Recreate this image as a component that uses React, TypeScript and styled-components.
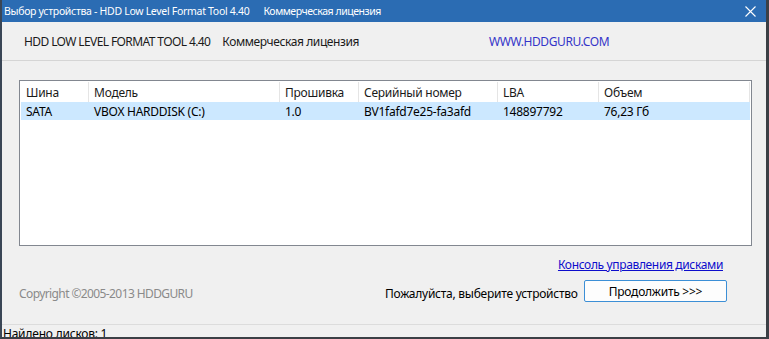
import React from "react";
import styled, { createGlobalStyle } from "styled-components";

const Global = createGlobalStyle`
  html, body { margin: 0; padding: 0; background: #3b3f45; }
  body { font-family: "Noto Sans", "Open Sans", sans-serif; }
  * { box-sizing: border-box; }
`;

const Window = styled.div`
  width: 769px;
  height: 339px;
  display: flex;
  flex-direction: column;
  background: #f0f0f0;
  border-left: 2px solid #3a4656;
  border-right: 3px solid #3b3f45;
  border-bottom: 2px solid #3b3f45;
  overflow: hidden;
  font-size: 12px;
  color: #000;
`;

const TitleBar = styled.div`
  height: 22px;
  flex: none;
  background: #2b6cb3;
  color: #fff;
  display: flex;
  align-items: center;
  padding-left: 2px;
  white-space: pre;
  font-size: 10.5px;
  letter-spacing: -0.3px;
`;

const TitleText = styled.span`
  flex: 1;
`;

const TitleLicense = styled.span`
  margin-left: 14px;
  letter-spacing: -0.45px;
`;

const Close = styled.span`
  width: 30px;
  display: flex;
  justify-content: center;
  margin-right: 1px;
`;

const Header = styled.div`
  height: 39px;
  flex: none;
  display: flex;
  align-items: center;
  padding-left: 22px;
  border-bottom: 1px solid #d5d5d5;
  color: #1a1a1a;
  white-space: pre;
`;

const Product = styled.span`
  width: 465px;
  display: flex;
`;

const ProductName = styled.span`
  letter-spacing: -0.6px;
`;

const License = styled.span`
  margin-left: 12px;
  letter-spacing: -0.4px;
`;

const Site = styled.span`
  color: #3434c8;
  letter-spacing: -0.4px;
`;

const Content = styled.div`
  flex: 1;
  display: flex;
  flex-direction: column;
  padding: 19px 15px 0 17px;
`;

const ListBox = styled.div`
  width: 733px;
  height: 166px;
  border: 1px solid #828790;
  background: #fff;
  padding: 1px;
  display: flex;
  flex-direction: column;
`;

const Row = styled.div<{ $head?: boolean; $selected?: boolean }>`
  display: grid;
  grid-template-columns: 68px 191px 79px 139px 101px 1fr;
  height: ${(p) => (p.$head ? "20px" : "18px")};
  background: ${(p) => (p.$selected ? "#cce8ff" : "transparent")};
  letter-spacing: -0.25px;
`;

const Cell = styled.div<{ $head?: boolean }>`
  display: flex;
  align-items: center;
  padding-left: 5px;
  white-space: nowrap;
  overflow: hidden;
  color: ${(p) => (p.$head ? "#1a1a1a" : "#000")};
  border-right: ${(p) => (p.$head ? "1px solid #e5e5e5" : "none")};
`;

const LinkRow = styled.div`
  display: flex;
  justify-content: flex-end;
  padding-right: 28px;
  margin-top: 10px;
  height: 17px;
  align-items: center;
`;

const Link = styled.span`
  color: #0d0dcc;
  text-decoration: underline;
  letter-spacing: -0.35px;
`;

const Bottom = styled.div`
  display: flex;
  align-items: center;
  margin-top: 7px;
  height: 22px;
`;

const Copyright = styled.span`
  width: 366px;
  color: #8a8a8a;
  padding-top: 4px;
  letter-spacing: -0.6px;
`;

const Prompt = styled.span`
  width: 199px;
  padding-top: 4px;
  letter-spacing: -0.25px;
`;

const Button = styled.button`
  width: 143px;
  height: 22px;
  background: #fdfdfd;
  border: 1px solid #3c8fd6;
  border-radius: 2px;
  font: inherit;
  font-size: 12px;
  color: #000;
  letter-spacing: -0.25px;
  padding: 0;
`;

const StatusBar = styled.div`
  margin-top: auto;
  height: 13px;
  flex: none;
  border-top: 1px solid #dcdcdc;
  padding-left: 1px;
  line-height: 17px;
  letter-spacing: -0.25px;
  color: #000;
`;

const columns = ["Шина", "Модель", "Прошивка", "Серийный номер", "LBA", "Объем"];
const rows = [["SATA", "VBOX HARDDISK (C:)", "1.0", "BV1fafd7e25-fa3afd", "148897792", "76,23 Гб"]];

export default function App() {
  return (
    <>
      <Global />
      <Window>
        <TitleBar>
          <TitleText>
            Выбор устройства - HDD Low Level Format Tool 4.40
            <TitleLicense>Коммерческая лицензия</TitleLicense>
          </TitleText>
          <Close>
            <svg width="11" height="11" viewBox="0 0 11 11">
              <path d="M0.5 0.5 L10.5 10.5 M10.5 0.5 L0.5 10.5" stroke="#fff" strokeWidth="1.1" />
            </svg>
          </Close>
        </TitleBar>
        <Header>
          <Product>
            <ProductName>HDD LOW LEVEL FORMAT TOOL 4.40</ProductName>
            <License>Коммерческая лицензия</License>
          </Product>
          <Site>WWW.HDDGURU.COM</Site>
        </Header>
        <Content>
          <ListBox>
            <Row $head>
              {columns.map((c) => (
                <Cell key={c} $head>{c}</Cell>
              ))}
            </Row>
            {rows.map((r, i) => (
              <Row key={i} $selected>
                {r.map((v, j) => (
                  <Cell key={j}>{v}</Cell>
                ))}
              </Row>
            ))}
          </ListBox>
          <LinkRow>
            <Link>Консоль управления дисками</Link>
          </LinkRow>
          <Bottom>
            <Copyright>Copyright ©2005-2013 HDDGURU</Copyright>
            <Prompt>Пожалуйста, выберите устройство</Prompt>
            <Button>Продолжить &gt;&gt;&gt;</Button>
          </Bottom>
        </Content>
        <StatusBar>Найдено дисков: 1</StatusBar>
      </Window>
    </>
  );
}
